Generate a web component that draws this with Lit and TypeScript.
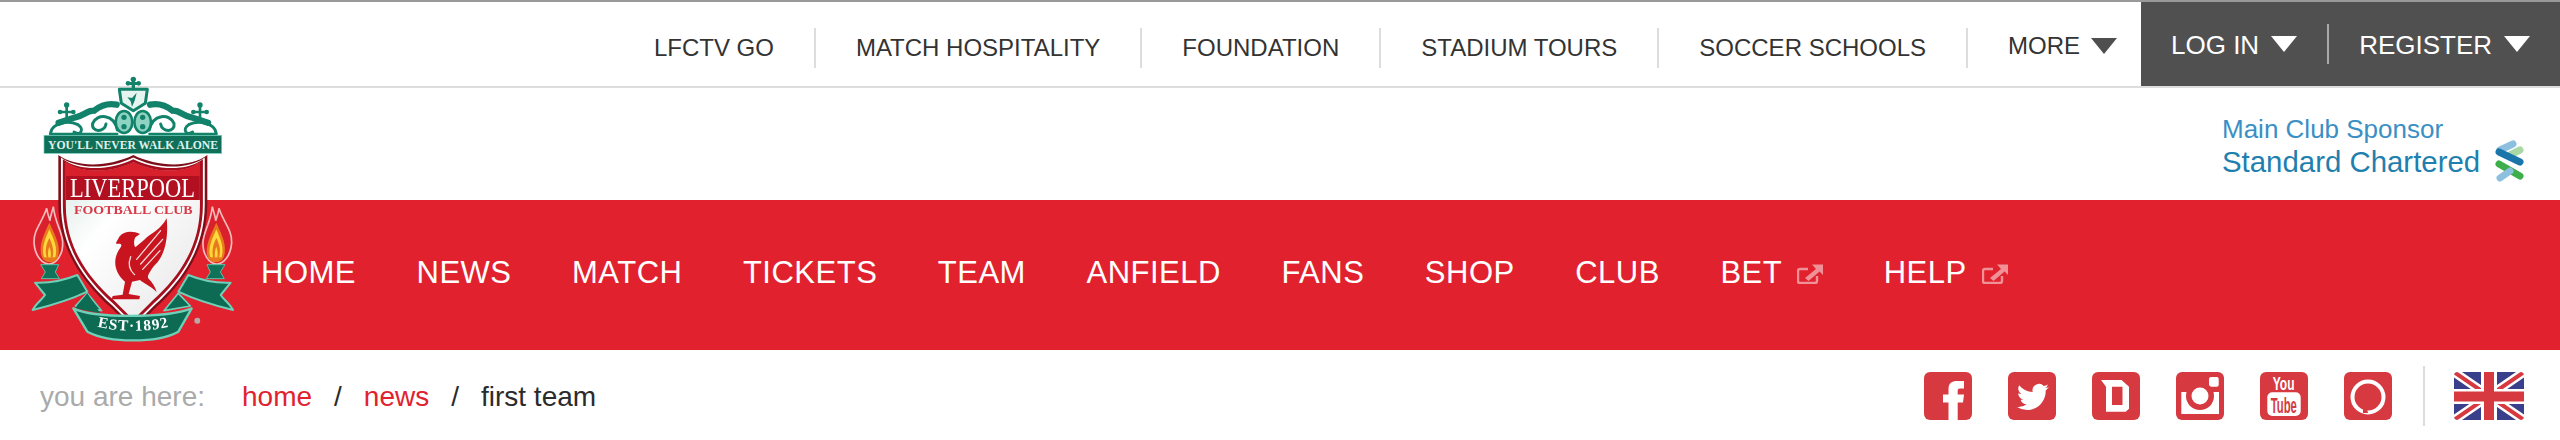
import { LitElement, html, svg, css } from "lit";
import { customElement } from "lit/decorators.js";

const TOP = ["LFCTV GO", "MATCH HOSPITALITY", "FOUNDATION", "STADIUM TOURS", "SOCCER SCHOOLS"];
const NAV: [string, boolean][] = [
  ["HOME", false], ["NEWS", false], ["MATCH", false], ["TICKETS", false], ["TEAM", false],
  ["ANFIELD", false], ["FANS", false], ["SHOP", false], ["CLUB", false], ["BET", true], ["HELP", true],
];

const SHIELD = "M175 285 C230 325 330 320 400 285 C470 320 570 325 622 285 L622 430 C622 560 560 660 465 745 L400 810 L335 745 C240 660 175 560 175 430 Z";

const crownHalf = svg`
  <g fill="none" stroke="#12836a" stroke-linecap="round">
    <path stroke-width="19" d="M350 134 C322 128 300 138 282 152 C262 150 250 168 226 172 L176 188" />
    <path stroke-width="9" d="M352 210 C342 160 290 160 278 190 C273 218 314 218 318 192" />
    <path stroke-width="9" d="M152 218 C156 192 200 178 234 194 C254 206 242 230 222 216" />
    <path stroke-width="7" d="M150 222 H352" />
    <path stroke-width="8" d="M200 135 V180 M182 156 H218" />
  </g>
  <circle cx="200" cy="135" r="8" fill="#12836a" />
  <circle cx="180" cy="156" r="7" fill="#12836a" />
  <circle cx="220" cy="156" r="7" fill="#12836a" />
  <ellipse cx="372" cy="186" rx="25" ry="33" fill="#8fd4c2" stroke="#12836a" stroke-width="8" />
  <circle cx="372" cy="172" r="8" fill="#12836a" />
  <circle cx="372" cy="200" r="8" fill="#12836a" />
`;

const flameHalf = svg`
  <path d="M140 445 C128 485 100 510 102 548 C105 590 128 612 146 612 C170 612 190 582 188 546 C186 512 165 490 160 440 C155 462 150 470 150 482 C146 470 142 460 140 445 Z" fill="#d9202c" stroke="#f5bcbc" stroke-width="5" />
  <path d="M148 488 C130 526 114 560 126 592 C134 612 166 612 174 592 C184 560 166 526 148 488 Z" fill="#e8791c" />
  <path d="M148 508 C134 540 124 564 132 592 L166 592 C174 564 162 540 148 508 Z" fill="#ffd83c" />
  <path d="M148 534 C138 554 134 572 140 592 L158 592 C162 572 158 554 148 534 Z" fill="#e8791c" />
  <path d="M148 560 C144 570 143 582 145 592 L152 592 C154 582 152 570 148 560 Z" fill="#ffd83c" />
  <path d="M122 614 H176 L166 636 L178 656 H124 L136 636 Z" fill="#0f7259" stroke="#55c4aa" stroke-width="3" />
  <path d="M105 668 C150 670 195 660 232 645 L262 695 C220 715 160 735 98 750 C108 730 125 720 135 705 Z" fill="#0d6a53" stroke="#6fd0b9" stroke-width="6" stroke-linejoin="round" />
  <path d="M226 738 L262 700 L305 752 Z" fill="#0d6a53" stroke="#6fd0b9" stroke-width="5" stroke-linejoin="round" />
`;

const crest = html`
  <svg class="crest" viewBox="0 0 780 870" width="260" height="290" role="img" aria-label="Liverpool Football Club crest">
    <defs>
      <linearGradient id="bodyFill" x1="0" y1="0" x2="1" y2="1">
        <stop offset="0" stop-color="#d8e8e2" />
        <stop offset=".35" stop-color="#ffffff" />
        <stop offset="1" stop-color="#e6e6e6" />
      </linearGradient>
      <clipPath id="bodyClip"><path transform="translate(400 500) scale(.9) translate(-400 -500)" d="${SHIELD}" /></clipPath>
    </defs>

    ${crownHalf}
    <g transform="translate(800 0) scale(-1 1)">${crownHalf}</g>
    <g fill="#12836a">
      <rect x="395" y="54" width="10" height="36" />
      <rect x="382" y="66" width="36" height="9" />
      <circle cx="400" cy="58" r="8" /><circle cx="384" cy="70" r="7" /><circle cx="416" cy="70" r="7" />
    </g>
    <path d="M358 88 H442 L436 130 L400 152 L364 130 Z" fill="#e6f5f0" stroke="#12836a" stroke-width="9" stroke-linejoin="round" />
    <path d="M410 98 L404 122 L396 140 L392 124 L382 112 L396 114 Z" fill="#12836a" />

    <rect x="132" y="226" width="533" height="54" fill="#0f6f58" stroke="#6bd0b8" stroke-width="2" />
    <text class="serif" x="144" y="266" font-size="35" font-weight="700" fill="#dff3ed" textLength="510" lengthAdjust="spacingAndGlyphs">YOU'LL NEVER WALK ALONE</text>

    ${flameHalf}
    <g transform="translate(797 0) scale(-1 1)">${flameHalf}</g>

    <path d="${SHIELD}" fill="#7d0f1a" />
    <path transform="translate(400 500) scale(.965) translate(-400 -500)" d="${SHIELD}" fill="#ffffff" />
    <path transform="translate(400 500) scale(.94) translate(-400 -500)" d="${SHIELD}" fill="#a50f1e" />
    <path transform="translate(400 500) scale(.9) translate(-400 -500)" d="${SHIELD}" fill="url(#bodyFill)" />
    <g clip-path="url(#bodyClip)">
      <rect x="170" y="280" width="460" height="140" fill="#b20f20" />
      <rect x="170" y="300" width="460" height="48" fill="#d81f2c" />
    </g>
    <text class="serif" x="210" y="412" font-size="84" fill="#ffffff" textLength="375" lengthAdjust="spacingAndGlyphs">LIVERPOOL</text>
    <text class="serif" x="222" y="463" font-size="38" font-weight="700" fill="#d83a48" textLength="356" lengthAdjust="spacingAndGlyphs">FOOTBALL CLUB</text>

    <path d="M348 548 L358 530 C370 515 395 510 420 522 L406 532 C400 545 402 556 406 562 L432 540 C452 520 482 510 500 475 C506 530 496 590 460 620 C446 640 440 650 446 656 C456 666 466 680 470 696 C450 676 430 670 420 660 L396 665 L386 702 L420 708 L418 718 L335 718 L338 708 L368 704 L375 665 C345 640 335 600 360 565 C368 555 365 550 350 552 Z" fill="#c8141f" />
    <g fill="none" stroke="#f7d9d9" stroke-width="4" stroke-linecap="round">
      <path d="M410 598 L482 512 M422 612 L488 538 M428 628 L480 572 M392 590 C384 610 388 630 404 644" />
    </g>

    <path d="M262 700 L225 745 L300 760 Z" fill="#0d6a53" />
    <path d="M220 745 C280 775 500 775 575 745 L535 815 C470 850 330 850 262 815 Z" fill="#0d6a53" stroke="#6fd0b9" stroke-width="7" stroke-linejoin="round" />
    <path id="estCurve" d="M240 782 C320 822 480 822 560 782" fill="none" />
    <text class="serif" font-size="46" font-weight="700" fill="#ffffff" letter-spacing="3" text-anchor="middle">
      <textPath href="#estCurve" startOffset="50%">EST·1892</textPath>
    </text>
    <circle cx="592" cy="782" r="9" fill="#b8a8a8" />
  </svg>
`;

const ext = html`
  <svg class="ext" viewBox="0 0 26 21" width="26" height="21" aria-hidden="true">
    <path d="M11 6 H3 A2 2 0 0 0 1 8 V18 A2 2 0 0 0 3 20 H18 A2 2 0 0 0 20 18 V13" fill="none" stroke="#fff" stroke-width="2.4" />
    <path d="M8 15 L19 6 L15 1.5 H26 V12 L22.6 8.5 L11.5 18 Z" fill="#fff" />
  </svg>
`;

const socialIcons = [
  svg`<path d="M24.5 48 V30.5 H19 V22.5 H24.5 V17 C24.5 11 28 9 33 9 H40 V16.5 H36 C34 16.5 33.7 17.5 33.7 19 V22.5 H40 L39 30.5 H33.7 V48 Z" fill="#fff" />`,
  svg`<path transform="translate(9 9) scale(1.33)" fill="#fff" d="M23.95 4.57a10 10 0 01-2.82.77 4.96 4.96 0 002.16-2.72c-.95.55-2 .96-3.12 1.18a4.92 4.92 0 00-8.38 4.48A13.94 13.94 0 011.64 3.16a4.93 4.93 0 001.52 6.57 4.9 4.9 0 01-2.23-.61c-.05 2.28 1.58 4.42 3.95 4.9a4.94 4.94 0 01-2.22.08 4.93 4.93 0 004.6 3.42A9.9 9.9 0 010 19.54a14 14 0 007.56 2.21c9.14 0 14.31-7.72 14-14.65a10 10 0 002.39-2.53z" />`,
  svg`<path fill-rule="evenodd" fill="#fff" d="M9 8 H29.5 L37 14.7 V36.7 L33.7 39.7 H14 V14.7 Z M20 14.7 V33 H30.5 V14.7 Z" />`,
  svg`<rect x="33" y="5" width="9.7" height="9.7" rx="2" fill="#fff" />
       <path d="M5.3 20 H43 V42 H5.3 Z" fill="#fff" />
       <circle cx="24" cy="24" r="14" fill="#d63a40" />
       <circle cx="24" cy="24" r="8.5" fill="#fff" />`,
  svg`<text transform="translate(12.7 18) scale(1 1.6)" class="sans" font-size="12" font-weight="700" fill="#fff">You</text>
       <rect x="7.3" y="20.3" width="33.4" height="23.7" rx="5" fill="#fff" />
       <text transform="translate(10.7 40.5) scale(1 2)" class="sans" font-size="11.3" font-weight="700" fill="#d63a40">Tube</text>`,
  svg`<ellipse cx="24" cy="25" rx="15.5" ry="15.5" fill="none" stroke="#fff" stroke-width="4" />
       <path d="M19 32 L19 41 L24 41 L23 37 Z" fill="#d63a40" />`,
];

const flag = html`
  <svg class="flag" viewBox="0 0 70 48" width="70" height="48" role="img" aria-label="English">
    <defs><clipPath id="flagClip"><rect width="70" height="48" rx="4" /></clipPath></defs>
    <g clip-path="url(#flagClip)">
      <rect width="70" height="48" fill="#3a3f8c" />
      <path d="M0 0 L70 48 M70 0 L0 48" stroke="#fff" stroke-width="9" />
      <path d="M0 0 L70 48 M70 0 L0 48" stroke="#d63a40" stroke-width="4" />
      <rect x="27" width="16" height="48" fill="#fff" />
      <rect y="17" width="70" height="15" fill="#fff" />
      <rect x="30" width="10" height="48" fill="#d63a40" />
      <rect y="19.5" width="70" height="10" fill="#d63a40" />
    </g>
  </svg>
`;

@customElement("app-root")
export class AppRoot extends LitElement {
  static styles = css`
    :host {
      display: block;
      position: relative;
      width: 2560px;
      height: 440px;
      overflow: hidden;
      background: #fff;
      font-family: "Liberation Sans", Arial, sans-serif;
      color: #333;
    }
    .serif { font-family: "Liberation Serif", serif; }
    .sans { font-family: "Liberation Sans", sans-serif; }

    .top {
      box-sizing: border-box;
      height: 88px;
      border-top: 2px solid #999;
      border-bottom: 2px solid #ddd;
      display: flex;
      justify-content: flex-end;
    }
    .links { display: flex; align-items: center; padding-top: 8px; height: 40px; margin-top: 18px; }
    .link {
      display: flex;
      align-items: center;
      height: 40px;
      line-height: 40px;
      font-size: 24px;
      padding: 0 40px;
      border-left: 2px solid #ddd;
      box-sizing: content-box;
    }
    .link:first-child { border-left: 0; }
    .more { padding-right: 24px; gap: 11px; }
    .more span { margin-bottom: 5px; line-height: 30px; }
    .tri {
      display: block;
      width: 0;
      height: 0;
      border-left: 13px solid transparent;
      border-right: 13px solid transparent;
      border-top: 16px solid #4f4f4f;
      margin-bottom: 5px;
    }
    .account {
      background: #505050;
      color: #fff;
      width: 419px;
      box-sizing: border-box;
      display: flex;
      align-items: center;
      padding-left: 30px;
      font-size: 26px;
    }
    .acct { display: flex; align-items: center; gap: 12px; }
    .acct span { padding-top: 2px; }
    .acct .tri { border-top-color: #fff; margin: 0; }
    .acct-div { width: 2px; height: 40px; background: #aaa; margin: 0 30px; }

    .sponsor {
      box-sizing: border-box;
      height: 112px;
      display: flex;
      justify-content: flex-end;
      padding: 25px 36px 0 0;
    }
    .sponsor-text { display: flex; flex-direction: column; width: 260px; margin-right: 13px; }
    .s1 { font-size: 26px; line-height: 32px; color: #3a8fc4; white-space: nowrap; }
    .s2 { font-size: 29.4px; line-height: 34px; color: #1f7fae; white-space: nowrap; }
    .s-logo { margin-top: 27px; }

    .nav {
      box-sizing: border-box;
      height: 150px;
      background: #e1222e;
      display: flex;
      align-items: center;
      gap: 60.5px;
      padding: 0 0 4px 261px;
      color: #fff;
      font-size: 31px;
      letter-spacing: 0.5px;
    }
    .nav-item { display: flex; align-items: center; gap: 15px; white-space: nowrap; }
    .ext { opacity: .5; }

    .crumbs {
      box-sizing: border-box;
      height: 90px;
      display: flex;
      justify-content: space-between;
      align-items: center;
      padding: 2px 36px 0 40px;
      font-size: 28px;
    }
    .trail { display: flex; gap: 22px; color: #2b2b2b; white-space: nowrap; padding-top: 2px; }
    .here { color: #aaa; margin-right: 15px; }
    .trail a { color: #e1222e; text-decoration: none; }
    .right { display: flex; align-items: center; }
    .social { display: flex; gap: 36px; }
    .social svg { display: block; }
    .vr { width: 2px; height: 60px; background: #ddd; margin: 0 29px 0 31px; }
    .flag { display: block; }

    .crest { position: absolute; left: 0; top: 60px; filter: blur(0.5px); }
  `;

  render() {
    return html`
      <div class="top">
        <div class="links">
          ${TOP.map((t) => html`<div class="link">${t}</div>`)}
          <div class="link more"><span>MORE</span><i class="tri"></i></div>
        </div>
        <div class="account">
          <div class="acct"><span>LOG IN</span><i class="tri"></i></div>
          <div class="acct-div"></div>
          <div class="acct"><span>REGISTER</span><i class="tri"></i></div>
        </div>
      </div>

      <div class="sponsor">
        <div class="sponsor-text">
          <div class="s1">Main Club Sponsor</div>
          <div class="s2">Standard Chartered</div>
        </div>
        <svg class="s-logo" viewBox="0 0 29 42" width="29" height="42" aria-hidden="true">
          <g fill="none" stroke-width="7" stroke-linecap="round">
            <path d="M18 4 L5 10" stroke="#8dbfdf" />
            <path d="M25 10 L15 15" stroke="#a9d8a4" />
            <path d="M4 12 L25 22" stroke="#1a75ab" />
            <path d="M4 24 L25 36" stroke="#3dae49" />
            <path d="M15 31 L5 38" stroke="#8dbfdf" />
          </g>
        </svg>
      </div>

      <nav class="nav">
        ${NAV.map(([t, e]) => html`<div class="nav-item"><span>${t}</span>${e ? ext : ""}</div>`)}
      </nav>

      <div class="crumbs">
        <div class="trail">
          <span class="here">you are here:</span>
          <a href="#">home</a><span>/</span>
          <a href="#">news</a><span>/</span>
          <span>first team</span>
        </div>
        <div class="right">
          <div class="social">
            ${socialIcons.map(
              (i) => html`<svg viewBox="0 0 48 48" width="48" height="48" aria-hidden="true">
                <rect width="48" height="48" rx="6" fill="#d63a40" />${i}
              </svg>`
            )}
          </div>
          <div class="vr"></div>
          ${flag}
        </div>
      </div>

      ${crest}
    `;
  }
}
